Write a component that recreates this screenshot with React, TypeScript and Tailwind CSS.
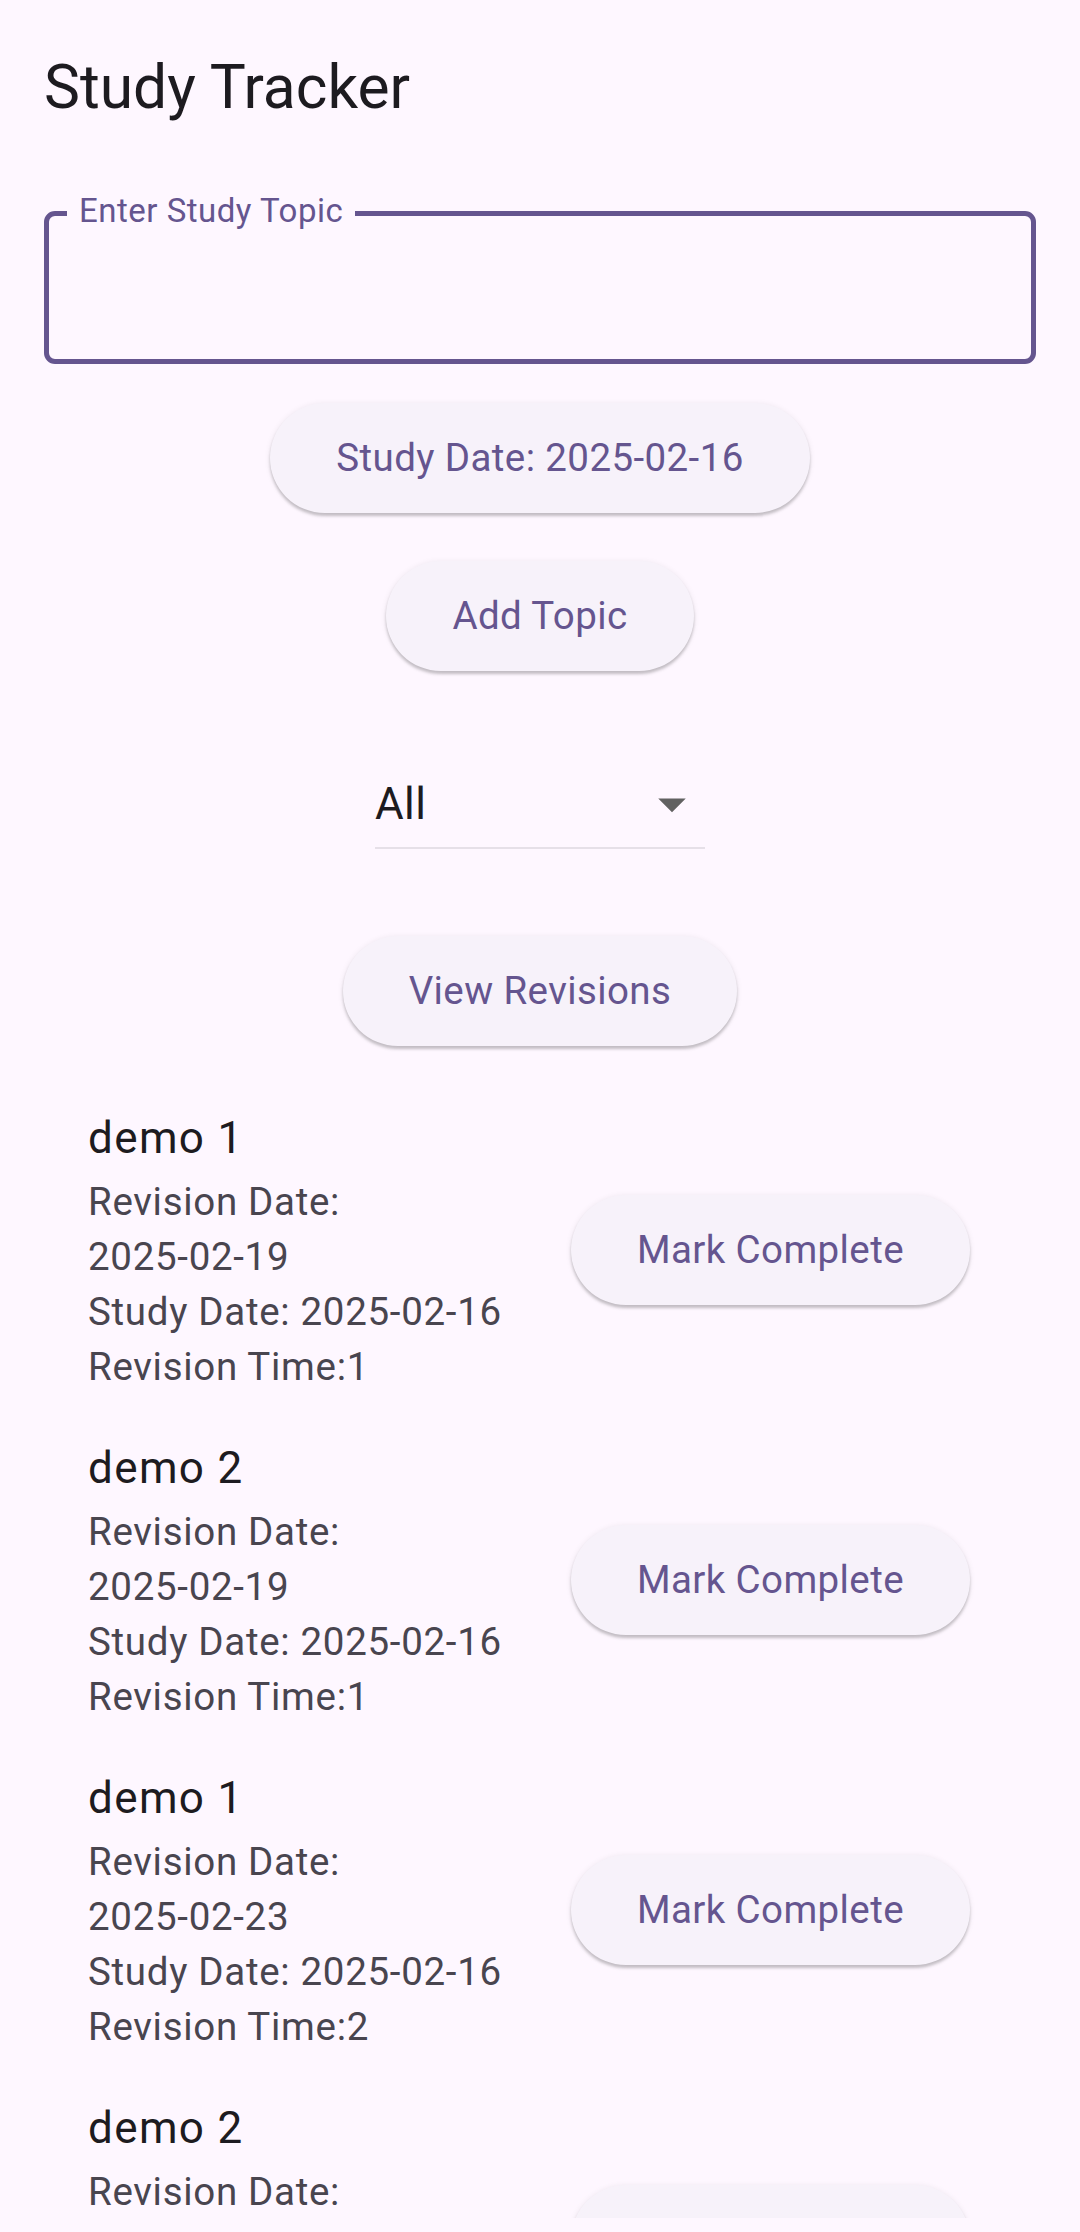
import React from "react";

const btn =
  "h-[110px] px-[66px] rounded-full bg-[#f7f2fa] text-[#65558f] text-[38.5px] font-normal tracking-[0.4px] leading-none whitespace-nowrap shadow-[0_3px_3px_rgba(0,0,0,0.2),0_1px_6px_rgba(0,0,0,0.08)]";

type Item = { name: string; rev: string; study: string; time: number };

const items: Item[] = [
  { name: "demo 1", rev: "2025-02-19", study: "2025-02-16", time: 1 },
  { name: "demo 2", rev: "2025-02-19", study: "2025-02-16", time: 1 },
  { name: "demo 1", rev: "2025-02-23", study: "2025-02-16", time: 2 },
  { name: "demo 2", rev: "2025-02-23", study: "2025-02-16", time: 2 },
];

function Row({ item }: { item: Item }) {
  return (
    <div className="flex items-center w-full pl-[88px] pr-[110px]">
      <div className="flex-1 pt-[20px] pb-[21px] whitespace-nowrap">
        <div className="text-[44px] leading-[66px] tracking-[1.375px] text-[#1d1b20]">
          {item.name}
        </div>
        <div className="mt-[3px] text-[38.5px] leading-[55px] tracking-[0.69px] text-[#49454f]">
          <div>Revision Date:</div>
          <div>{item.rev}</div>
          <div>Study Date: {item.study}</div>
          <div>Revision Time:{item.time}</div>
        </div>
      </div>
      <button className={"ml-[44px] " + btn}>Mark Complete</button>
    </div>
  );
}

export default function App() {
  return (
    <div className="w-[1080px] h-[2232px] overflow-hidden bg-[#fef7ff] font-['Roboto',sans-serif]">
      <header className="h-[176px] flex items-center px-[44px]">
        <h1 className="text-[60.5px] leading-none text-[#1d1b20] font-normal">Study Tracker</h1>
      </header>
      <main className="flex flex-col items-center">
        <div className="px-[44px] w-full">
          <div className="relative mt-[35px] w-full h-[153px] rounded-[11px] border-[5.5px] border-[#65558f]">
            <span className="absolute left-[18px] top-[-27px] px-[12px] bg-[#fef7ff] text-[33px] leading-[44px] tracking-[0.5px] text-[#65558f] whitespace-nowrap">
              Enter Study Topic
            </span>
          </div>
        </div>

        <button className={"mt-[39px] " + btn}>Study Date: 2025-02-16</button>
        <button className={"mt-[48px] " + btn}>Add Topic</button>

        <div className="mt-[100px] w-[330px]">
          <div className="flex h-[66px] items-center justify-between">
            <span className="text-[44px] leading-[66px] tracking-[0.4px] text-[#1d1b20]">All</span>
            <svg width="66" height="66" viewBox="0 0 24 24" className="shrink-0">
              <path d="M7 10l5 5 5-5z" fill="#616161" />
            </svg>
          </div>
          <div className="mt-[10px] h-[2px] bg-[#e6e0e8]" />
        </div>

        <button className={"mt-[87px] " + btn}>View Revisions</button>

        <div className="mt-[39px] w-full h-[1133px] overflow-hidden flex flex-col">
          {items.map((it, i) => (
            <Row key={i} item={it} />
          ))}
        </div>
      </main>
    </div>
  );
}
